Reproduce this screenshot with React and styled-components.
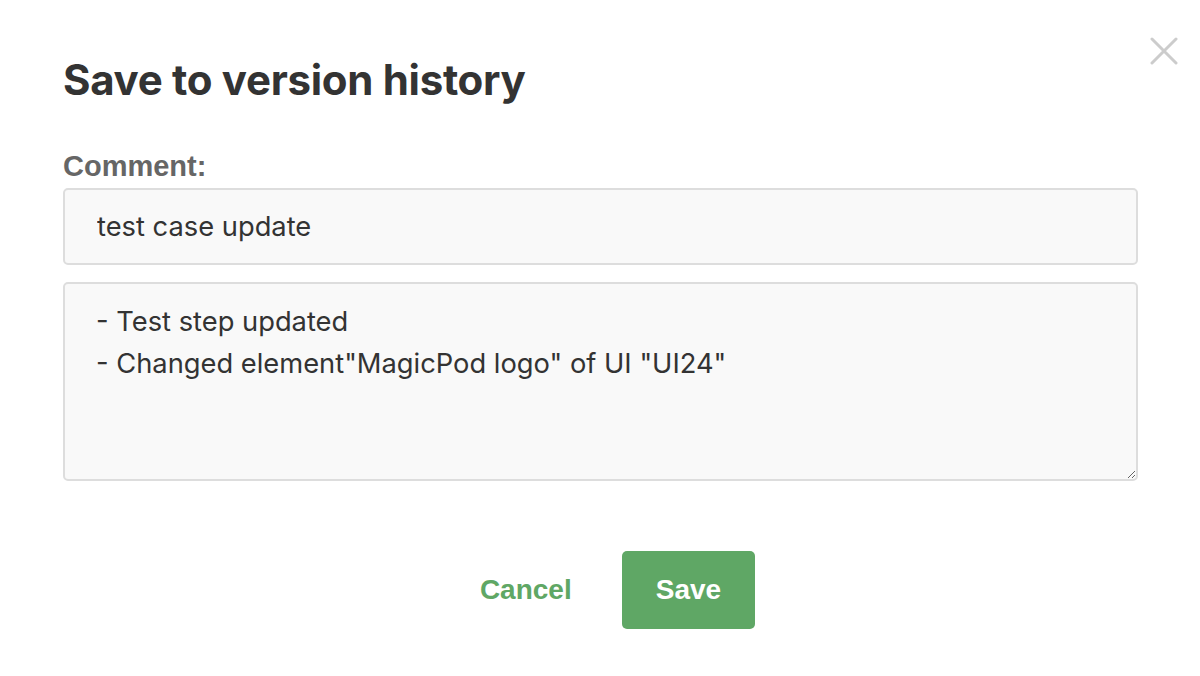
import React, { useState } from 'react'
import styled, { createGlobalStyle } from 'styled-components'

const GlobalStyle = createGlobalStyle`
  body {
    margin: 0;
    background: #ffffff;
  }
`

const Dialog = styled.div`
  position: relative;
  width: 1200px;
  height: 676px;
  box-sizing: border-box;
  padding: 56px 62px 0 63px;
  background: #ffffff;
`
const CloseButton = styled.button`
  position: absolute;
  top: 37px;
  right: 22px;
  width: 28px;
  height: 28px;
  padding: 0;
  border: none;
  background: transparent;
  cursor: pointer;
  display: flex;
  align-items: center;
  justify-content: center;
`
const Title = styled.h1`
  margin: 0;
  font-family: Inter, 'Noto Sans', sans-serif;
  font-size: 42px;
  line-height: 48px;
  font-weight: 700;
  letter-spacing: -0.3px;
  color: #333333;
`
const Label = styled.label`
  display: block;
  margin-top: 46px;
  font-family: 'Liberation Sans', Arial, sans-serif;
  font-size: 29px;
  line-height: 32px;
  font-weight: 700;
  color: #666666;
`
const Fields = styled.div`
  display: flex;
  flex-direction: column;
  gap: 17px;
  margin-top: 6px;
`
const fieldStyle = `
  width: 100%;
  box-sizing: border-box;
  background: #f9f9f9;
  border: 2px solid #dddddd;
  border-radius: 5px;
  font-family: Inter, 'Noto Sans', sans-serif;
  font-size: 27.3px;
  color: #333333;
  &:focus {
    outline: none;
  }
`
const TextInput = styled.input`
  ${fieldStyle}
  height: 77px;
  padding: 0 32px;
`
const TextArea = styled.textarea`
  ${fieldStyle}
  height: 199px;
  padding: 17px 31px;
  line-height: 42px;
  resize: vertical;
`
const Actions = styled.div`
  display: flex;
  justify-content: center;
  gap: 16px;
  margin-top: 70px;
`
const ActionButton = styled.button`
  height: 78px;
  padding: 0 34px;
  border: none;
  border-radius: 5px;
  font-family: 'Liberation Sans', Arial, sans-serif;
  font-size: 28px;
  font-weight: 700;
  cursor: pointer;
  background: ${p => p.primary ? '#5fa765' : 'transparent'};
  color: ${p => p.primary ? '#ffffff' : '#5fa765'};
`

export default function App() {
  const [comment, setComment] = useState('test case update')
  const [details, setDetails] = useState('- Test step updated\n- Changed element"MagicPod logo" of UI "UI24"')

  return (
    <>
      <GlobalStyle />
      <Dialog>
        <CloseButton aria-label="Close">
          <svg width="28" height="28" viewBox="0 0 28 28">
            <path d="M2 2 L26 26 M26 2 L2 26" stroke="#cccccc" strokeWidth="3" strokeLinecap="round" />
          </svg>
        </CloseButton>
        <Title>Save to version history</Title>
        <Label htmlFor="comment">Comment:</Label>
        <Fields>
          <TextInput
            id="comment"
            value={comment}
            onChange={(e) => setComment(e.target.value)}
          />
          <TextArea
            value={details}
            onChange={(e) => setDetails(e.target.value)}
          />
        </Fields>
        <Actions>
          <ActionButton>Cancel</ActionButton>
          <ActionButton primary>Save</ActionButton>
        </Actions>
      </Dialog>
    </>
  )
}
